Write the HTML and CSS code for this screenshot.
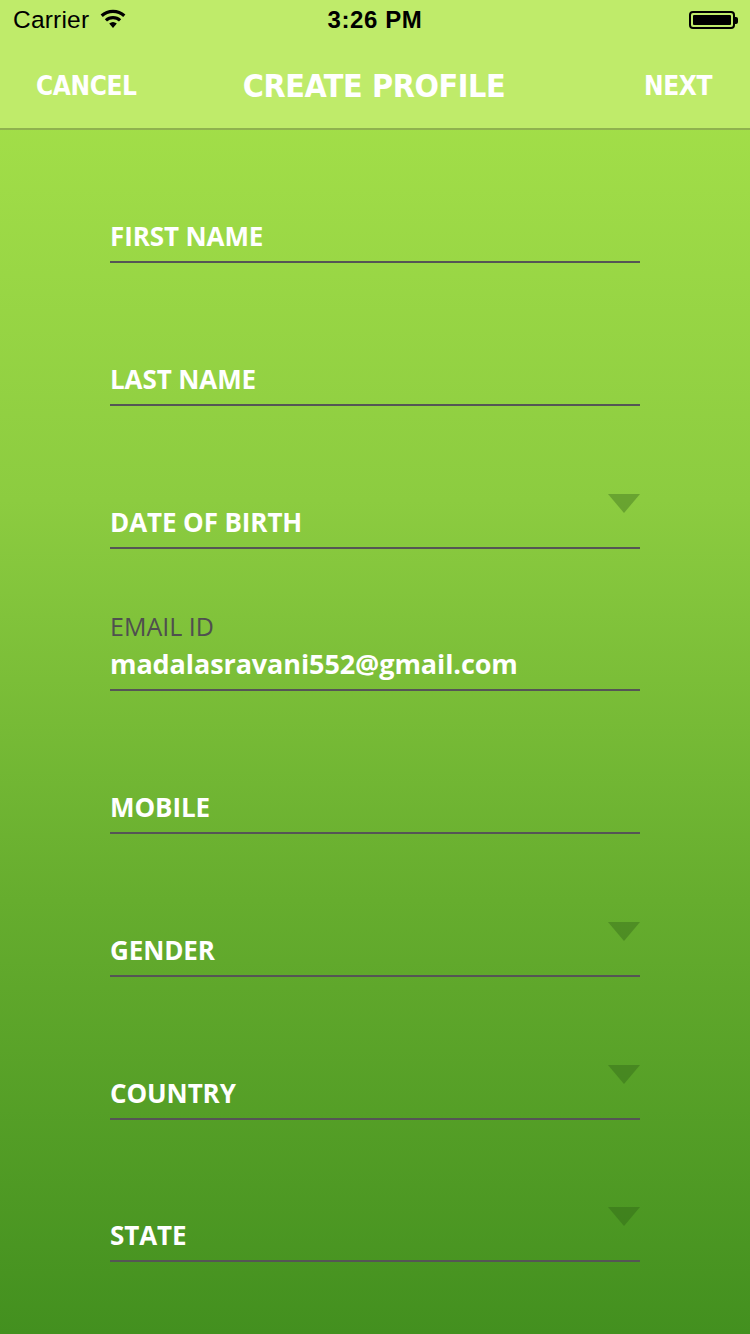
FILE: index.html
```html
<!DOCTYPE html>
<html>
<head>
<meta charset="utf-8">
<link rel="stylesheet" href="styles.css">
</head>
<body>
<div class="screen">
  <header class="top">
    <div class="status">
      <div class="status-left">
        <span class="carrier">Carrier</span>
        <svg class="wifi" width="26" height="20" viewBox="0 0 26 20">
          <path d="M13 19 L9.2 14.6 A6 6 0 0 1 16.8 14.6 Z" fill="#000"/>
          <path d="M4.8 10.2 A12 12 0 0 1 21.2 10.2 L19 12.6 A8.8 8.8 0 0 0 7 12.6 Z" fill="#000"/>
          <path d="M0.6 5.6 A18 18 0 0 1 25.4 5.6 L23.2 8 A14.8 14.8 0 0 0 2.8 8 Z" fill="#000"/>
        </svg>
      </div>
      <div class="time">3:26 PM</div>
      <div class="status-right">
        <div class="battery"><div class="battery-fill"></div></div>
        <div class="battery-tip"></div>
      </div>
    </div>
    <nav class="navbar">
      <span class="nav-btn nav-left">CANCEL</span>
      <span class="nav-title">CREATE PROFILE</span>
      <span class="nav-btn nav-right">NEXT</span>
    </nav>
  </header>
  <main class="form">
    <div class="field"><span class="label">FIRST NAME</span></div>
    <div class="field"><span class="label">LAST NAME</span></div>
    <div class="field"><span class="label">DATE OF BIRTH</span><span class="caret"></span></div>
    <div class="field"><span class="hint">EMAIL ID</span><span class="value">madalasravani552@gmail.com</span></div>
    <div class="field"><span class="label">MOBILE</span></div>
    <div class="field"><span class="label">GENDER</span><span class="caret"></span></div>
    <div class="field"><span class="label">COUNTRY</span><span class="caret"></span></div>
    <div class="field"><span class="label">STATE</span><span class="caret"></span></div>
  </main>
</div>
</body>
</html>
```
FILE: styles.css
```css
* { box-sizing: border-box; }
html, body { margin: 0; padding: 0; }
body { width: 750px; height: 1334px; overflow: hidden; font-family: "Open Sans", "Liberation Sans", sans-serif; }
.screen {
  width: 750px; height: 1334px;
  display: flex; flex-direction: column;
  background: linear-gradient(to bottom, #a9e44b 0px, #8ccc40 500px, #66ad2e 900px, #43901f 1334px);
}
.top {
  background: #bfeb6a;
  border-bottom: 2px solid #8fb24e;
  height: 130px;
  flex: none;
}
.status {
  height: 40px;
  display: flex; align-items: center; justify-content: space-between;
  padding: 0 12px 0 13px;
  position: relative;
}
.status-left { display: flex; align-items: center; gap: 11px; }
.carrier { font-family: "Liberation Sans", Arial, sans-serif; font-size: 24.5px; color: #000; letter-spacing: 0.2px; }
.wifi { margin-top: -2px; }
.time {
  position: absolute; left: 0; right: 0; text-align: center;
  font-family: "Liberation Sans", Arial, sans-serif; font-weight: 700; font-size: 24px; color: #000;
  letter-spacing: 0.6px;
  pointer-events: none;
}
.status-right { display: flex; align-items: center; }
.battery {
  width: 46px; height: 18px; border: 2px solid #000; border-radius: 4px; padding: 2px;
}
.battery-fill { width: 100%; height: 100%; background: #000; border-radius: 1px; }
.battery-tip { width: 3px; height: 7px; background: #000; border-radius: 0 2px 2px 0; }
.navbar {
  height: 88px;
  display: grid; grid-template-columns: 1fr auto 1fr; align-items: center;
  padding: 4px 38px 0 36px;
  color: #fff;
  font-family: "DejaVu Sans Condensed", "DejaVu Sans", sans-serif; font-weight: 700;
}
.nav-btn { font-size: 26px; letter-spacing: -0.4px; }
.nav-left { justify-self: start; }
.nav-right { justify-self: end; }
.nav-title { font-size: 32px; letter-spacing: -0.4px; }
.form {
  flex: 1;
  display: flex; flex-direction: column;
  padding: 0 110px;
}
.field {
  height: 142.75px;
  flex: none;
  display: flex; flex-direction: column; justify-content: flex-end;
  border-bottom: 2px solid #555555;
  padding-bottom: 5px;
  position: relative;
}
.form .field:first-child { height: 133px; }
.label {
  color: #fff; font-weight: 700; font-size: 26px; line-height: 34px; letter-spacing: -0.1px;
  margin-bottom: 3px;
}
.hint {
  color: #4f4f4f; font-weight: 400; font-size: 25px; line-height: 28px; letter-spacing: 0px;
  margin-bottom: 4px;
}
.value {
  color: #fff; font-weight: 700; font-size: 27px; line-height: 40px; letter-spacing: -0.1px;
}
.caret {
  position: absolute; right: 0; bottom: 34px;
  width: 0; height: 0;
  border-left: 16px solid transparent; border-right: 16px solid transparent;
  border-top: 19px solid rgba(40, 90, 20, 0.35);
}
```
